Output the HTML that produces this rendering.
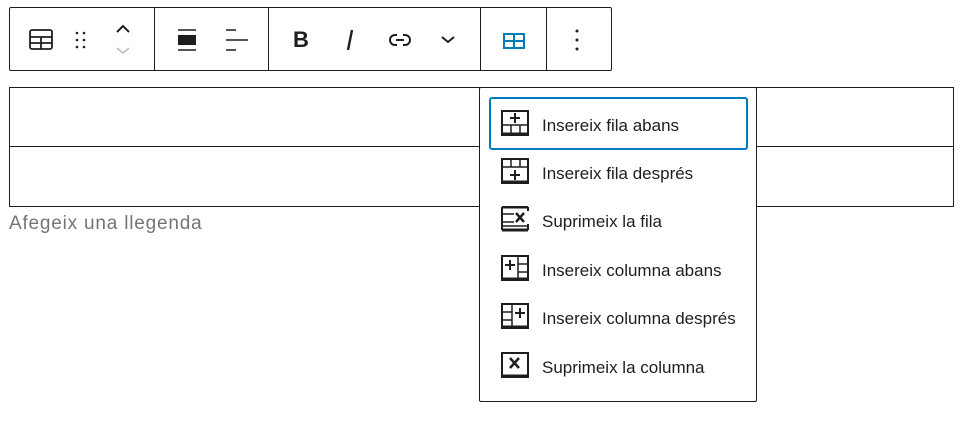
<!DOCTYPE html>
<html><head><meta charset="utf-8"><style>
*{box-sizing:border-box;margin:0;padding:0}
body{width:964px;height:430px;background:#fff;font-family:"Liberation Sans",sans-serif;position:relative;overflow:hidden;color:#1e1e1e}
.tb{position:absolute;left:9px;top:7px;width:603px;height:64px;border:1px solid #1e1e1e;border-radius:2px}
.sep{position:absolute;top:0;bottom:0;width:1px;background:#1e1e1e}
.ic{position:absolute}
.tbl{position:absolute;left:9px;top:87px;width:945px;height:120px;border:1px solid #1e1e1e}
.tbl .mid{position:absolute;left:0;right:0;top:58px;height:1px;background:#1e1e1e}
.cap{position:absolute;left:9px;top:213px;font-size:19px;letter-spacing:0.8px;color:#757575}
.menu{position:absolute;left:479px;top:87px;width:278px;height:315px;border:1px solid #1e1e1e;border-radius:2px;background:#fff}
.hl{position:absolute;left:9px;top:9px;width:259px;height:53px;border:2px solid #007cba;border-radius:3px}
.it{position:absolute;left:62px;font-size:17px;color:#1e1e1e}
</style></head><body>
<div class="tb">
 <svg class="ic" style="left:18px;top:19px" width="26" height="26" viewBox="0 0 26 26"><rect x="2" y="3" width="22" height="19" rx="2" fill="none" stroke="#1e1e1e" stroke-width="1.8"/><path d="M2 10h22M2 16h22M13 10v12" stroke="#1e1e1e" stroke-width="1.8"/></svg>
 <svg class="ic" style="left:64px;top:22px" width="14" height="22"><g fill="#1e1e1e"><circle cx="3" cy="3" r="1.3"/><circle cx="10" cy="3" r="1.3"/><circle cx="3" cy="10" r="1.3"/><circle cx="10" cy="10" r="1.3"/><circle cx="3" cy="17" r="1.3"/><circle cx="10" cy="17" r="1.3"/></g></svg>
 <svg class="ic" style="left:104px;top:14px" width="18" height="34"><path d="M3 10l6-6 6 6" fill="none" stroke="#1e1e1e" stroke-width="2"/><path d="M3 26l6 5 6-5" fill="none" stroke="#bbb" stroke-width="1.5"/></svg>
 <div class="sep" style="left:144px"></div>
 <svg class="ic" style="left:166px;top:20px" width="22" height="24"><path d="M2 2h18M2 22h18" stroke="#1e1e1e" stroke-width="1.5"/><rect x="2" y="7" width="18" height="10" fill="#1e1e1e"/></svg>
 <svg class="ic" style="left:214px;top:20px" width="26" height="24"><path d="M2 2h10M2 12h22M2 22h10" stroke="#1e1e1e" stroke-width="1.5"/></svg>
 <div class="sep" style="left:258px"></div>
 <div class="ic" style="left:283px;top:19px;font-weight:bold;font-size:22px">B</div>
 <svg class="ic" style="left:334px;top:20px" width="12" height="24"><path d="M8 2L4 22" stroke="#1e1e1e" stroke-width="2.4"/></svg>
 <svg class="ic" style="left:378px;top:25px" width="24" height="14"><path d="M9 2H7a5 5 0 0 0 0 10h2M15 2h2a5 5 0 0 1 0 10h-2M8 7h8" fill="none" stroke="#1e1e1e" stroke-width="2"/></svg>
 <svg class="ic" style="left:430px;top:27px" width="16" height="10"><path d="M2 2l6 5 6-5" fill="none" stroke="#1e1e1e" stroke-width="2"/></svg>
 <div class="sep" style="left:470px"></div>
 <svg class="ic" style="left:493px;top:25px" width="22" height="16"><rect x="1" y="1" width="20" height="14" fill="none" stroke="#007cba" stroke-width="2"/><path d="M1 8h20M11 1v14" stroke="#007cba" stroke-width="2"/></svg>
 <div class="sep" style="left:536px"></div>
 <svg class="ic" style="left:564px;top:20px" width="6" height="24"><g fill="#1e1e1e"><circle cx="3" cy="3" r="1.5"/><circle cx="3" cy="12" r="1.5"/><circle cx="3" cy="21" r="1.5"/></g></svg>
</div>
<div class="tbl"><div class="mid"></div></div>
<div class="cap">Afegeix una llegenda</div>
<div class="menu">
 <div class="hl"></div>
 <svg class="ic" style="left:21px;top:22px" width="28" height="26"><rect x="1" y="1" width="26" height="24" fill="none" stroke="#1e1e1e" stroke-width="2"/><path d="M1 15h26M10 15v10M19 15v10" stroke="#1e1e1e" stroke-width="1.5"/><path d="M9 8h10M14 3v10" stroke="#1e1e1e" stroke-width="2"/><path d="M1 24h26" stroke="#1e1e1e" stroke-width="3"/></svg>
 <div class="it" style="top:28px">Insereix fila abans</div>
 <svg class="ic" style="left:21px;top:70px" width="28" height="26"><rect x="1" y="1" width="26" height="24" fill="none" stroke="#1e1e1e" stroke-width="2"/><path d="M1 9h26M10 1v8M19 1v8" stroke="#1e1e1e" stroke-width="1.5"/><path d="M9 17h10M14 12v10" stroke="#1e1e1e" stroke-width="2"/><path d="M1 24h26" stroke="#1e1e1e" stroke-width="3"/></svg>
 <div class="it" style="top:76px">Insereix fila després</div>
 <svg class="ic" style="left:21px;top:118px" width="28" height="26"><path d="M1 1h26M1 24h26" stroke="#1e1e1e" stroke-width="3"/><path d="M1 1v23M27 1v4M27 18v6" stroke="#1e1e1e" stroke-width="2"/><path d="M1 8h12M1 16h12M1 20h26" stroke="#1e1e1e" stroke-width="1.5"/><path d="M15 7l8 9M23 7l-8 9" stroke="#1e1e1e" stroke-width="2.5"/></svg>
 <div class="it" style="top:124px">Suprimeix la fila</div>
 <svg class="ic" style="left:21px;top:167px" width="28" height="26"><rect x="1" y="1" width="26" height="24" fill="none" stroke="#1e1e1e" stroke-width="2"/><path d="M17 1v24M17 9h10M17 17h10" stroke="#1e1e1e" stroke-width="1.5"/><path d="M4 10h10M9 5v10" stroke="#1e1e1e" stroke-width="2"/><path d="M1 24h26" stroke="#1e1e1e" stroke-width="3"/></svg>
 <div class="it" style="top:173px">Insereix columna abans</div>
 <svg class="ic" style="left:21px;top:215px" width="28" height="26"><rect x="1" y="1" width="26" height="24" fill="none" stroke="#1e1e1e" stroke-width="2"/><path d="M11 1v24M1 9h10M1 17h10" stroke="#1e1e1e" stroke-width="1.5"/><path d="M14 10h10M19 5v10" stroke="#1e1e1e" stroke-width="2"/><path d="M1 24h26" stroke="#1e1e1e" stroke-width="3"/></svg>
 <div class="it" style="top:221px">Insereix columna després</div>
 <svg class="ic" style="left:21px;top:264px" width="28" height="26"><rect x="1" y="1" width="26" height="24" fill="none" stroke="#1e1e1e" stroke-width="2"/><path d="M9 6l9 10M18 6l-9 10" stroke="#1e1e1e" stroke-width="2.5"/><path d="M1 24h26" stroke="#1e1e1e" stroke-width="3"/></svg>
 <div class="it" style="top:270px">Suprimeix la columna</div>
</div>
</body></html>
